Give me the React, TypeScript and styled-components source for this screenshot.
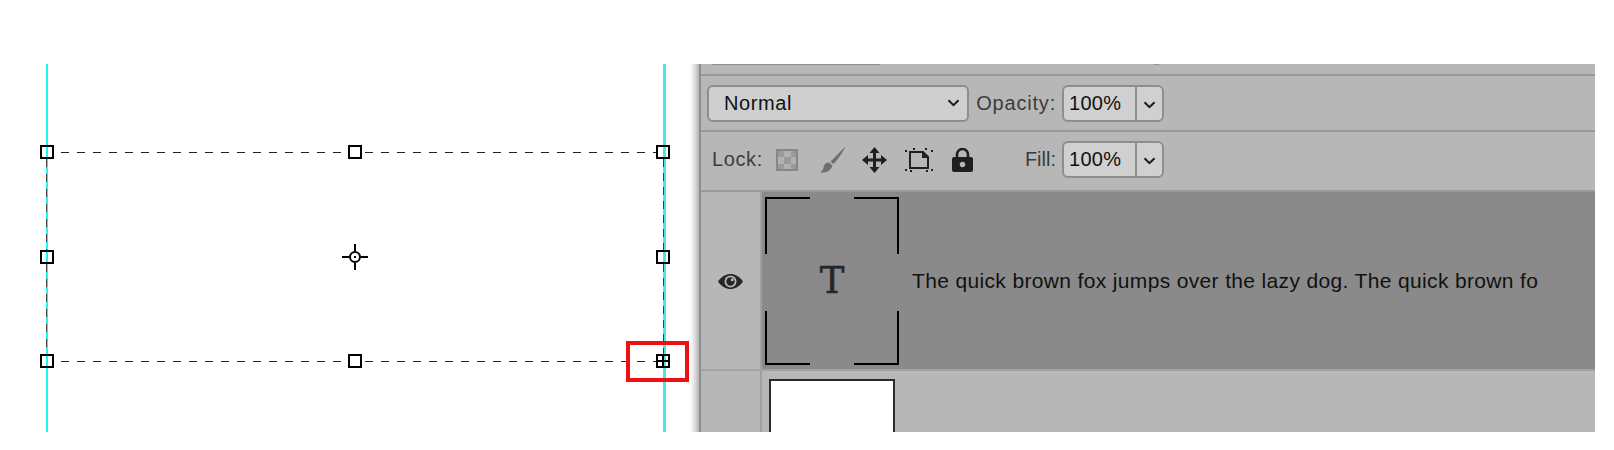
import React from 'react'
import styled, { createGlobalStyle } from 'styled-components'

const GlobalStyle = createGlobalStyle`
  html, body {
    margin: 0;
    padding: 0;
    background: #fff;
    font-family: 'Liberation Sans', Arial, sans-serif;
  }
`

const Page = styled.div`
  display: flex;
  width: 1614px;
  height: 450px;
  padding-top: 64px;
  box-sizing: border-box;
  overflow: hidden;
`

const Canvas = styled.svg`
  display: block;
  flex: none;
  width: 690px;
  height: 368px;
`

const PanelShadow = styled.div`
  flex: none;
  width: 9px;
  height: 368px;
  background: linear-gradient(90deg, #ffffff 0%, #e4e4e4 45%, #b4b4b4 100%);
`

const Panel = styled.div`
  flex: none;
  width: 896px;
  height: 368px;
  box-sizing: border-box;
  border-left: 2px solid #8f8f8f;
  background: #b7b7b7;
  overflow: hidden;
`

const ClippedRow = styled.div`
  display: flex;
  align-items: flex-end;
  height: 12px;
  box-sizing: border-box;
  padding: 0 0 9px 7px;
  border-bottom: 2px solid #9a9a9a;
  overflow: hidden;
`

const ClippedField = styled.div`
  flex: none;
  width: 176px;
  height: 30px;
  box-sizing: border-box;
  border: 2px solid #8e8e8e;
  border-radius: 6px;
  background: #cfcfcf;
`

const ClippedKnob = styled.div`
  flex: none;
  width: 15px;
  height: 15px;
  margin-left: 265px;
  box-sizing: border-box;
  border: 2px solid #8e8e8e;
  border-radius: 50%;
  background: #d8d8d8;
`

const OptionRow = styled.div<{ $height: number; $lift?: number }>`
  display: grid;
  grid-template-columns: 262px 93px 102px;
  align-items: center;
  height: ${p => p.$height}px;
  box-sizing: border-box;
  padding-left: 6px;
  padding-bottom: ${p => p.$lift ?? 0}px;
  border-bottom: 2px solid #9a9a9a;
`

const Select = styled.div`
  display: flex;
  align-items: center;
  justify-content: space-between;
  height: 37px;
  box-sizing: border-box;
  padding: 0 7px 0 15px;
  border: 2px solid #8e8e8e;
  border-radius: 6px;
  background: #cfcfcf;
  color: #111;
  font-size: 20px;
  letter-spacing: 0.6px;
  line-height: 35px;
`

const SelectText = styled.span`
  padding-top: 1px;
`

const Label = styled.div<{ $spacing: number }>`
  padding-right: 6px;
  color: #3c3c3c;
  font-size: 20px;
  letter-spacing: ${p => p.$spacing}px;
  text-align: right;
  white-space: nowrap;
`

const Combo = styled.div`
  display: grid;
  grid-template-columns: 71px 2px 1fr;
  align-items: center;
  height: 37px;
  box-sizing: border-box;
  border: 2px solid #8e8e8e;
  border-radius: 6px;
  background: #d0d0d0;
  color: #111;
  font-size: 20px;
  letter-spacing: 0.3px;
`

const ComboValue = styled.span`
  padding-left: 5px;
`

const ComboRule = styled.span`
  height: 100%;
  background: #8e8e8e;
`

const ComboArrow = styled.span`
  display: flex;
  justify-content: center;
  padding-top: 3px;
`

const LockTools = styled.div`
  display: flex;
  align-items: center;
  padding-left: 5px;
  white-space: nowrap;
`

const LockLabel = styled.span`
  flex: none;
  width: 64px;
  color: #3c3c3c;
  font-size: 20px;
  letter-spacing: 0.6px;
`

const ToolIcon = styled.svg<{ $gap: number }>`
  display: block;
  flex: none;
  margin-right: ${p => p.$gap}px;
`

const LayerRow = styled.div<{ $selected?: boolean; $height: number }>`
  display: flex;
  height: ${p => p.$height}px;
  box-sizing: border-box;
  border-bottom: ${p => (p.$selected ? '2px solid #a2a2a2' : 'none')};
`

const EyeColumn = styled.div`
  flex: none;
  display: flex;
  align-items: center;
  justify-content: center;
  width: 59px;
  padding-top: 2px;
  box-sizing: content-box;
  border-right: 2px solid #a0a0a0;
`

const LayerBody = styled.div<{ $selected?: boolean }>`
  flex: 1;
  display: flex;
  align-items: ${p => (p.$selected ? 'center' : 'flex-start')};
  background: ${p => (p.$selected ? '#8a8a8a' : '#b7b7b7')};
`

const TextThumb = styled.div`
  position: relative;
  flex: none;
  display: flex;
  align-items: center;
  justify-content: center;
  width: 134px;
  height: 168px;
  margin-left: 3px;
  color: #262626;
  font-family: 'DejaVu Serif', serif;
  font-size: 37px;
  -webkit-text-stroke: 0.5px #262626;
`

const ThumbCorner = styled.span<{ $v: 'top' | 'bottom'; $h: 'left' | 'right'; $tall: number }>`
  position: absolute;
  ${p => p.$v}: 0;
  ${p => p.$h}: 0;
  width: 45px;
  height: ${p => p.$tall}px;
  box-sizing: border-box;
  border-${p => p.$v}: 2px solid #000;
  border-${p => p.$h}: 2px solid #000;
`

const LayerName = styled.div`
  margin-left: 13px;
  color: #111;
  font-size: 21px;
  letter-spacing: 0.35px;
  white-space: nowrap;
`

const BlankThumb = styled.div`
  flex: none;
  width: 126px;
  height: 70px;
  margin: 8px 0 0 7px;
  box-sizing: border-box;
  border: 2px solid #2a2a2a;
  border-bottom: none;
  background: #fff;
`

const Chevron = () => (
  <svg width="13" height="8" viewBox="0 0 13 8" fill="none">
    <path d="M1.5 1.2 L6.5 6.2 L11.5 1.2" stroke="#1c1c1c" strokeWidth="2" />
  </svg>
)

const PercentField = () => (
  <Combo>
    <ComboValue>100%</ComboValue>
    <ComboRule />
    <ComboArrow>
      <Chevron />
    </ComboArrow>
  </Combo>
)

// coordinates are page x, and page y minus the 64px top offset
const Handle = ({ x, y }: { x: number; y: number }) => (
  <rect x={x - 6} y={y - 6} width="12" height="12" fill="none" stroke="#000" strokeWidth="2" />
)

const HANDLES = [
  [47, 88], [355, 88], [663, 88],
  [47, 193], [663, 193],
  [47, 297], [355, 297], [663, 297],
]

const DASH_SEGMENTS = [
  [61, 348, 88.5],
  [365, 656, 88.5],
  [61, 348, 297.5],
  [365, 656, 297.5],
]

const TransformBox = () => (
  <Canvas viewBox="0 0 690 368" shapeRendering="crispEdges">
    <rect x="46" y="0" width="2" height="368" fill="#1ff4f4" />
    <rect x="663" y="0" width="3" height="368" fill="#45e8e8" />
    {DASH_SEGMENTS.map(([x1, x2, y]) => (
      <line key={`${x1}-${y}`} x1={x1} y1={y} x2={x2} y2={y} stroke="#222" strokeDasharray="8 8" />
    ))}
    <path d="M46.5 95 V186 M46.5 200 V290" stroke="#444" strokeDasharray="8 7" />
    <path d="M663.5 95 V186 M663.5 200 V290" stroke="#6b2a2a" strokeDasharray="8 6" />
    {HANDLES.map(([x, y]) => (
      <Handle key={`${x}-${y}`} x={x} y={y} />
    ))}
    <path d="M657 297 H669 M663 291 V303" stroke="#000" strokeWidth="2" />
    <g shapeRendering="auto">
      <circle cx="355" cy="193" r="5" fill="none" stroke="#000" strokeWidth="2" />
      <rect x="354" y="192" width="2" height="2" fill="#000" />
      <path d="M342 193 H349 M361 193 H368 M355 180 V187 M355 199 V206" stroke="#000" strokeWidth="2" />
    </g>
    <rect x="628" y="279" width="59" height="37" fill="none" stroke="#ee1111" strokeWidth="4" />
  </Canvas>
)

const CheckerIcon = () => (
  <ToolIcon $gap={22} width="22" height="22" viewBox="0 0 22 22">
    <rect width="22" height="22" fill="#9a9a9a" />
    <path d="M8 1h7v7H8z M1 8h7v7H1z M15 8h6v7h-6z M8 15h7v6H8z" fill="#b2b2b2" />
    <rect x="1" y="1" width="20" height="20" fill="none" stroke="#868686" strokeWidth="2" />
  </ToolIcon>
)

const BrushIcon = () => (
  <ToolIcon $gap={16} width="26" height="27" viewBox="0 0 26 27">
    <path d="M25.5 0.5 C21 5 15 11 10.5 15.5 L13.5 18 C18 13 23 6 25.5 0.5 Z" fill="#6e6e6e" />
    <path d="M9 16.5 C5 16.5 4 19.5 3.5 22 C3 24.5 1.5 25.5 0 26.5 C5 27 11 25.5 12.3 19.5 Z" fill="#6e6e6e" />
  </ToolIcon>
)

const MoveIcon = () => (
  <ToolIcon $gap={18} width="25" height="26" viewBox="0 0 25 26">
    <path
      d="M12.5 0 L17.5 6 H14 V11.5 H19 V8 L25 13 L19 18 V14.5 H14 V20 H17.5 L12.5 26 L7.5 20 H11 V14.5 H6 V18 L0 13 L6 8 V11.5 H11 V6 H7.5 Z"
      fill="#1f1f1f"
    />
  </ToolIcon>
)

const ArtboardIcon = () => (
  <ToolIcon $gap={19} width="28" height="24" viewBox="0 0 28 24">
    <path d="M5 4 H18 L23 9 V20 H5 Z" fill="none" stroke="#1f1f1f" strokeWidth="2" />
    <path d="M17 4 L23 10 H17 Z" fill="#1f1f1f" />
    <path d="M0 2h2v2H0z M8 0h2v2H8z M20 0h2v2h-2z M26 2h2v2h-2z M0 21h2v2H0z M5 22h2v2H5z M21 22h2v2h-2z M26 21h2v2h-2z" fill="#1f1f1f" />
  </ToolIcon>
)

const LockIcon = () => (
  <ToolIcon $gap={0} width="21" height="24" viewBox="0 0 21 24">
    <path d="M5 10 V6.5 a5.5 5.5 0 0 1 11 0 V10" fill="none" stroke="#1f1f1f" strokeWidth="2.6" />
    <path
      fillRule="evenodd"
      d="M2 9 H19 a2 2 0 0 1 2 2 V22 a2 2 0 0 1 -2 2 H2 a2 2 0 0 1 -2 -2 V11 a2 2 0 0 1 2 -2 Z M10.5 13.7 a2.8 2.8 0 1 0 0.01 0 Z"
      fill="#1f1f1f"
    />
  </ToolIcon>
)

const EyeIcon = () => (
  <svg width="25" height="15" viewBox="0 0 25 15">
    <path d="M0 7.5 C4 2 8 0 12.5 0 C17 0 21 2 25 7.5 C21 13 17 15 12.5 15 C8 15 4 13 0 7.5 Z" fill="#262626" />
    <circle cx="12.5" cy="7.5" r="6" fill="#b7b7b7" />
    <circle cx="12.5" cy="7.5" r="4.2" fill="#262626" />
    <circle cx="14.2" cy="5.8" r="1.5" fill="#b7b7b7" />
  </svg>
)

const App = () => (
  <>
    <GlobalStyle />
    <Page>
      <TransformBox />
      <PanelShadow />
      <Panel>
        <ClippedRow>
          <ClippedField />
          <ClippedKnob />
        </ClippedRow>
        <OptionRow $height={56}>
          <Select>
            <SelectText>Normal</SelectText>
            <Chevron />
          </Select>
          <Label $spacing={0.8}>Opacity:</Label>
          <PercentField />
        </OptionRow>
        <OptionRow $height={60} $lift={3}>
          <LockTools>
            <LockLabel>Lock:</LockLabel>
            <CheckerIcon />
            <BrushIcon />
            <MoveIcon />
            <ArtboardIcon />
            <LockIcon />
          </LockTools>
          <Label $spacing={0}>Fill:</Label>
          <PercentField />
        </OptionRow>
        <LayerRow $selected $height={179}>
          <EyeColumn>
            <EyeIcon />
          </EyeColumn>
          <LayerBody $selected>
            <TextThumb>
              <ThumbCorner $v="top" $h="left" $tall={57} />
              <ThumbCorner $v="top" $h="right" $tall={57} />
              <ThumbCorner $v="bottom" $h="left" $tall={54} />
              <ThumbCorner $v="bottom" $h="right" $tall={54} />
              T
            </TextThumb>
            <LayerName>The quick brown fox jumps over the lazy dog. The quick brown fo</LayerName>
          </LayerBody>
        </LayerRow>
        <LayerRow $height={70}>
          <EyeColumn />
          <LayerBody>
            <BlankThumb />
          </LayerBody>
        </LayerRow>
      </Panel>
    </Page>
  </>
)

export default App
